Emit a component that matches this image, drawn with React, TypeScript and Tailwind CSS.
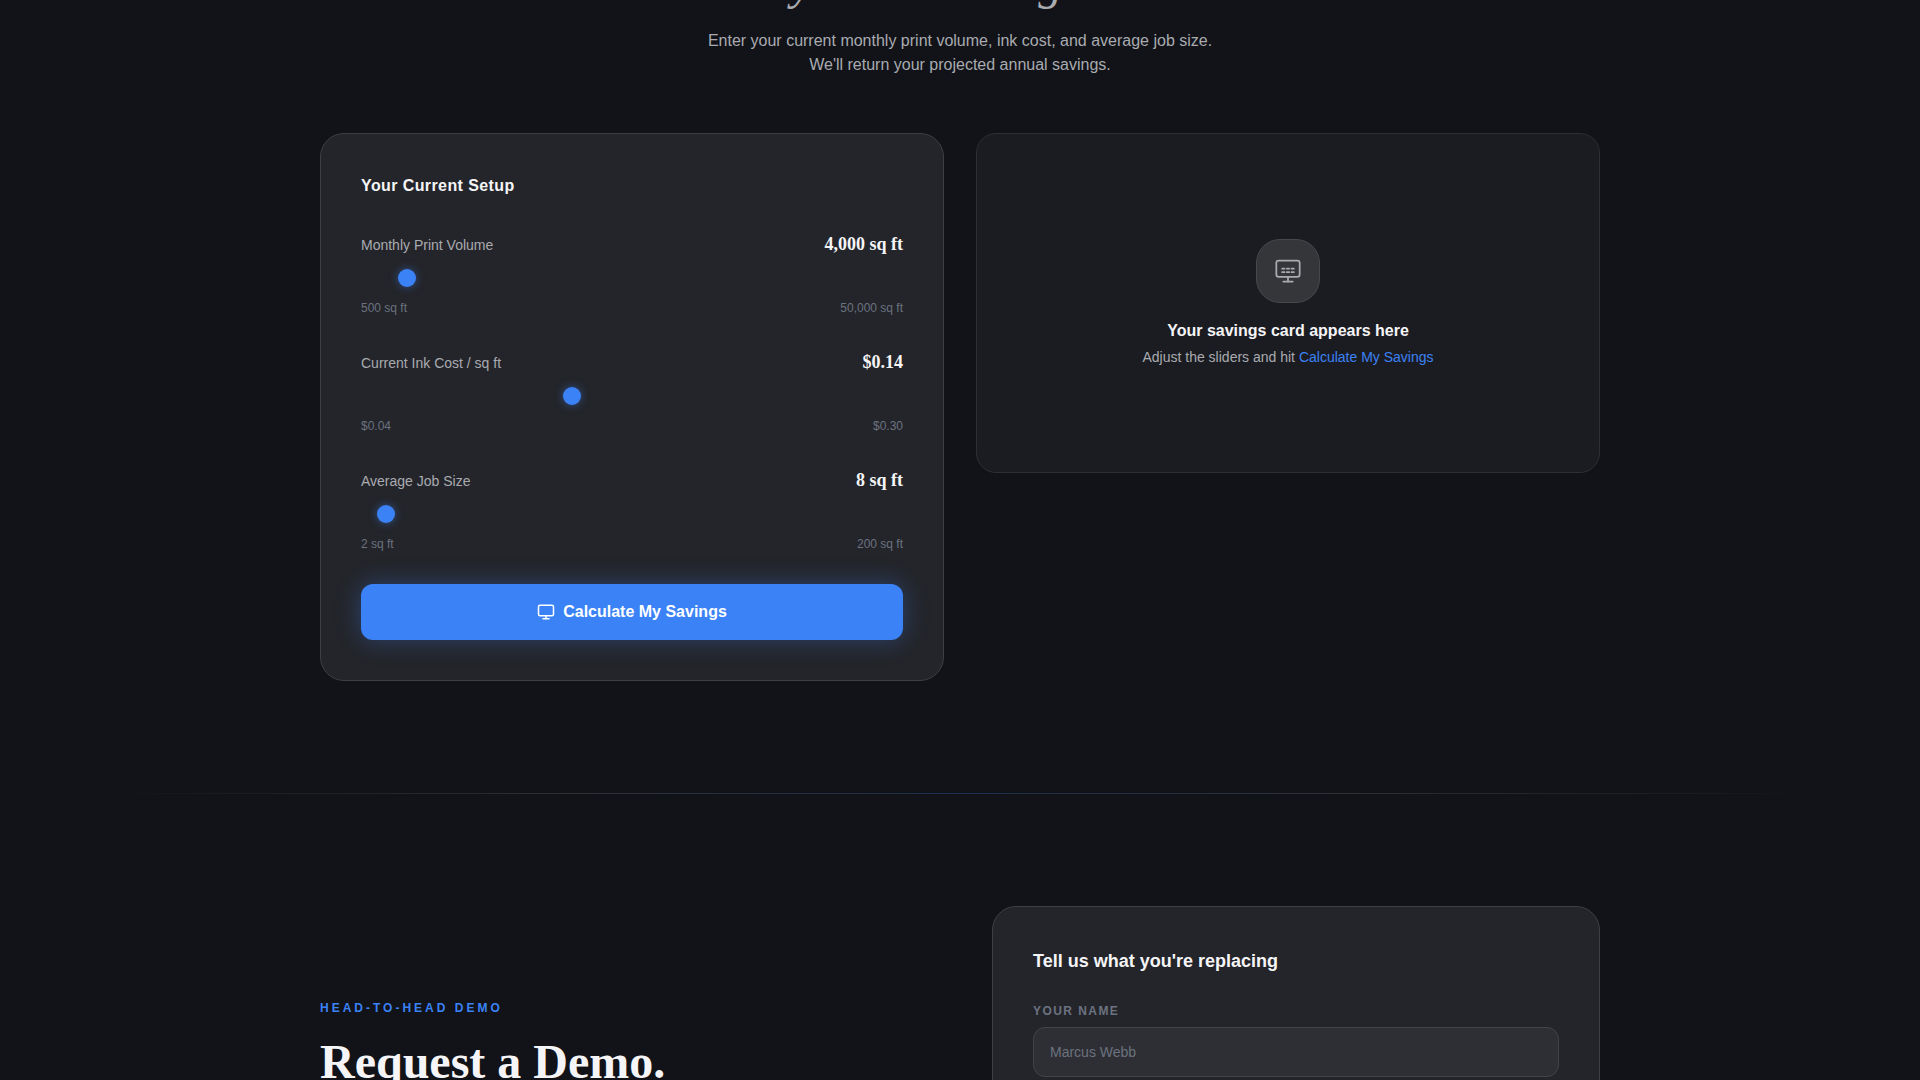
import { useState } from "react";

interface SliderConfig {
  id: string;
  label: string;
  min: number;
  max: number;
  step: number;
  initial: number;
  format: (value: number) => string;
}

const sqft = (value: number) => `${value.toLocaleString("en-US")} sq ft`;
const dollars = (value: number) => `$${value.toFixed(2)}`;

const sliders: SliderConfig[] = [
  { id: "volume", label: "Monthly Print Volume", min: 500, max: 50000, step: 500, initial: 4000, format: sqft },
  { id: "ink", label: "Current Ink Cost / sq ft", min: 0.04, max: 0.3, step: 0.01, initial: 0.14, format: dollars },
  { id: "job", label: "Average Job Size", min: 2, max: 200, step: 1, initial: 8, format: sqft },
];

function MonitorIcon({ className, keys }: { className: string; keys?: boolean }) {
  return (
    <svg
      className={className}
      viewBox="0 0 24 24"
      fill="none"
      stroke="currentColor"
      strokeWidth={keys ? 1.5 : 2}
      strokeLinecap="round"
      strokeLinejoin="round"
      aria-hidden="true"
    >
      <rect x="2" y="3" width="20" height="14" rx="2" />
      <path d="M8 21h8M12 17v4" />
      {keys && <path d="M7 10h2M11 10h2M15 10h2M7 13h2M11 13h2M15 13h2" />}
    </svg>
  );
}

function RangeField({ config }: { config: SliderConfig }) {
  const [value, setValue] = useState(config.initial);
  return (
    <div>
      <div className="flex h-7 items-baseline justify-between">
        <label htmlFor={config.id} className="text-sm text-[#a9abb0]">
          {config.label}
        </label>
        <output
          htmlFor={config.id}
          className="font-['Liberation_Serif',serif] text-lg font-bold text-[#f5f5f7]"
        >
          {config.format(value)}
        </output>
      </div>
      <input
        id={config.id}
        type="range"
        min={config.min}
        max={config.max}
        step={config.step}
        value={value}
        onChange={(e) => setValue(Number(e.target.value))}
        className="mt-2.5 block h-5 w-full cursor-pointer appearance-none bg-transparent [&::-webkit-slider-thumb]:size-[18px] [&::-webkit-slider-thumb]:appearance-none [&::-webkit-slider-thumb]:rounded-full [&::-webkit-slider-thumb]:bg-[#3b82f6] [&::-webkit-slider-thumb]:shadow-[0_0_8px_rgba(59,130,246,0.5)]"
      />
      <div className="mt-3 flex justify-between text-xs text-[#6b7280]">
        <span>{config.format(config.min)}</span>
        <span>{config.format(config.max)}</span>
      </div>
    </div>
  );
}

function Calculator() {
  return (
    <section className="px-6 pb-28">
      <div className="-mt-[43px] text-center">
        <h2 className="font-['Liberation_Serif',serif] text-5xl leading-[52px] text-[#a9abb0] italic">
          See what you're leaving on the table.
        </h2>
        <p className="mx-auto mt-5 max-w-[520px] text-base text-[#a9abb0]">
          Enter your current monthly print volume, ink cost, and average job size. We'll return your
          projected annual savings.
        </p>
      </div>
      <div className="mx-auto mt-14 grid max-w-7xl items-start gap-8 lg:grid-cols-2">
        <form
          className="rounded-3xl border border-[#3e3f44] bg-[#24252a] p-10"
          onSubmit={(e) => e.preventDefault()}
        >
          <h3 className="text-base font-bold tracking-wide text-[#f5f5f7]">Your Current Setup</h3>
          <div className="mt-8 flex flex-col gap-8">
            {sliders.map((config) => (
              <RangeField key={config.id} config={config} />
            ))}
          </div>
          <button
            type="submit"
            className="mt-8 flex h-14 w-full items-center justify-center gap-2 rounded-xl bg-[#3b82f6] text-base font-bold text-white shadow-[0_0_24px_rgba(59,130,246,0.35)]"
          >
            <MonitorIcon className="size-[18px]" />
            Calculate My Savings
          </button>
        </form>
        <div className="flex min-h-[340px] flex-col items-center justify-center rounded-[20px] border border-[#2e2f34] bg-[#1b1c21] p-10 text-center">
          <div className="flex size-16 items-center justify-center rounded-3xl border border-[#47484c] bg-[#35363a] text-[#a9abb0]">
            <MonitorIcon className="size-7" keys />
          </div>
          <p className="mt-4 text-base font-bold text-[#f5f5f7]">Your savings card appears here</p>
          <p className="mt-1 text-sm text-[#a9abb0]">
            Adjust the sliders and hit <span className="text-[#3b82f6]">Calculate My Savings</span>
          </p>
        </div>
      </div>
    </section>
  );
}

function DemoRequest() {
  return (
    <section className="px-6 py-28">
      <div className="mx-auto grid max-w-7xl items-start gap-16 lg:grid-cols-2">
        <div className="pt-[94px]">
          <p className="text-xs font-bold tracking-[0.25em] text-[#3b82f6] uppercase">
            Head-to-Head Demo
          </p>
          <h2 className="mt-5 font-['Liberation_Serif',serif] text-5xl leading-[52px] font-bold text-[#f5f5f7]">
            Request a Demo.
          </h2>
        </div>
        <form
          className="rounded-3xl border border-[#3e3f44] bg-[#24252a] p-10"
          onSubmit={(e) => e.preventDefault()}
        >
          <h3 className="text-lg font-bold text-[#f5f5f7]">Tell us what you're replacing</h3>
          <label
            htmlFor="name"
            className="mt-7 block text-xs font-bold tracking-[0.12em] text-[#6b7280] uppercase"
          >
            Your Name
          </label>
          <input
            id="name"
            type="text"
            placeholder="Marcus Webb"
            className="mt-2 h-[50px] w-full rounded-xl border border-[#424348] bg-[#2e2f34] px-4 text-sm text-[#f5f5f7] placeholder:text-[#6b7280]"
          />
        </form>
      </div>
    </section>
  );
}

export default function App() {
  return (
    <main className="flow-root h-screen overflow-hidden bg-[#111318] font-['Liberation_Sans',Arial,sans-serif]">
      <Calculator />
      <div className="h-px bg-[linear-gradient(90deg,transparent_5%,rgba(255,255,255,0.12)_30%,rgba(59,130,246,0.25)_50%,rgba(255,255,255,0.12)_70%,transparent_95%)]" />
      <DemoRequest />
    </main>
  );
}
